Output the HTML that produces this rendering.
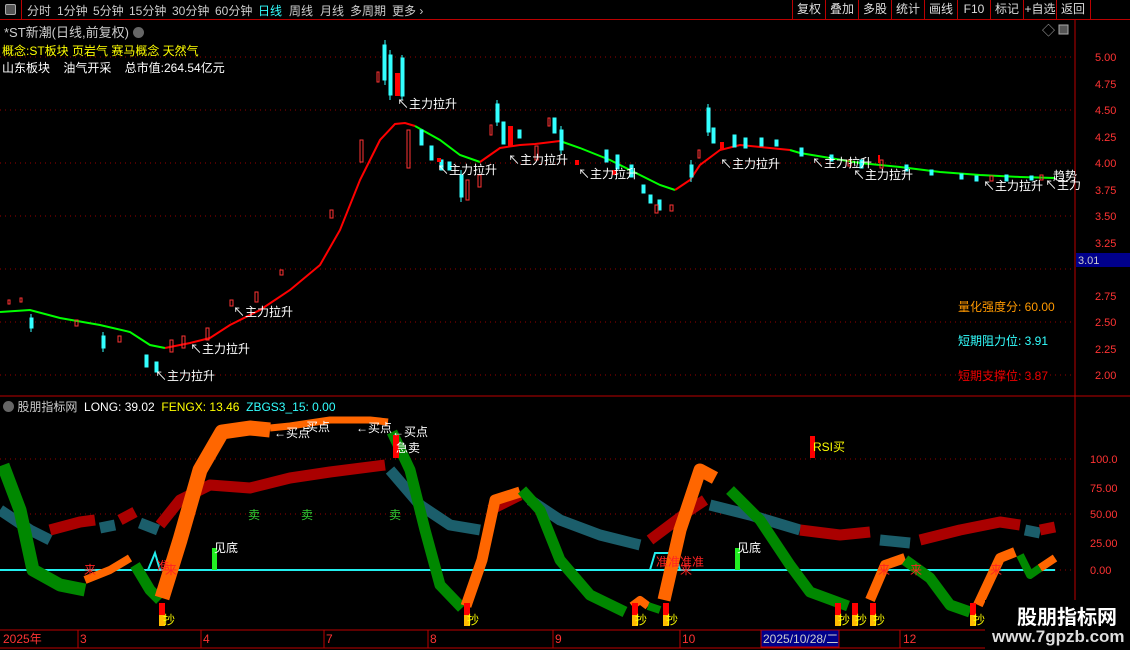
<!DOCTYPE html>
<html><head><meta charset="utf-8"><style>
html,body{margin:0;padding:0;background:#000;width:1130px;height:650px;overflow:hidden;font-family:"Liberation Sans","Noto Sans CJK SC",sans-serif;}
.t{position:absolute;font-size:12px;white-space:nowrap;}
#top{position:absolute;left:0;top:0;width:1130px;height:19px;border-bottom:1px solid #b00;}
#top span{position:absolute;top:2px;font-size:12px;color:#ccc;white-space:nowrap;}
.rb{position:absolute;top:0;height:19px;border-left:1px solid #b00;color:#ddd;font-size:12px;line-height:19px;text-align:center;white-space:nowrap;overflow:hidden;}
</style></head><body>
<div id="top">
<div style="position:absolute;left:0;top:0;width:21px;height:19px;border-right:1px solid #b00;"><div style="position:absolute;left:5px;top:4px;width:9px;height:9px;border:1px solid #aaa;background:#555;border-radius:2px"></div></div>
<span style="left:27px">分时</span><span style="left:57px">1分钟</span><span style="left:93px">5分钟</span><span style="left:129px">15分钟</span><span style="left:172px">30分钟</span><span style="left:215px">60分钟</span><span style="left:258px;color:#3ff">日线</span><span style="left:289px">周线</span><span style="left:320px">月线</span><span style="left:350px">多周期</span><span style="left:392px">更多 ›</span>
<div class="rb" style="left:792px;width:32px">复权</div><div class="rb" style="left:825px;width:32px">叠加</div><div class="rb" style="left:858px;width:32px">多股</div><div class="rb" style="left:891px;width:32px">统计</div><div class="rb" style="left:924px;width:32px">画线</div><div class="rb" style="left:957px;width:32px">F10</div><div class="rb" style="left:990px;width:32px">标记</div><div class="rb" style="left:1023px;width:32px">+自选</div><div class="rb" style="left:1056px;width:32px">返回</div><div class="rb" style="left:1090px;width:40px"></div>
</div>
<svg width="1130" height="650" style="position:absolute;left:0;top:0" xmlns="http://www.w3.org/2000/svg">
<g stroke="#b00" fill="none">
<line x1="1075" y1="20" x2="1075" y2="630"/>
<line x1="0" y1="396" x2="1130" y2="396"/>
<line x1="0" y1="630" x2="1130" y2="630"/>
<line x1="0" y1="648" x2="1130" y2="648"/>
</g>
<g stroke="#900" stroke-dasharray="1,4">
<line x1="0" y1="57" x2="1075" y2="57"/><line x1="0" y1="110" x2="1075" y2="110"/><line x1="0" y1="163" x2="1075" y2="163"/><line x1="0" y1="216" x2="1075" y2="216"/><line x1="0" y1="269" x2="1075" y2="269"/><line x1="0" y1="322" x2="1075" y2="322"/><line x1="0" y1="375" x2="1075" y2="375"/>
<line x1="0" y1="459" x2="1075" y2="459"/><line x1="0" y1="514" x2="1075" y2="514"/><line x1="0" y1="570" x2="1075" y2="570"/>
</g>
<g fill="#f33" font-size="11" font-family="Liberation Sans">
<text x="1095" y="61">5.00</text><text x="1095" y="88">4.75</text><text x="1095" y="114">4.50</text><text x="1095" y="141">4.25</text><text x="1095" y="167">4.00</text><text x="1095" y="194">3.75</text><text x="1095" y="220">3.50</text><text x="1095" y="247">3.25</text><text x="1095" y="300">2.75</text><text x="1095" y="326">2.50</text><text x="1095" y="353">2.25</text><text x="1095" y="379">2.00</text>
<text x="1090" y="463">100.0</text><text x="1090" y="492">75.00</text><text x="1090" y="518">50.00</text><text x="1090" y="547">25.00</text><text x="1090" y="574">0.00</text>
</g>
<rect x="1076" y="253" width="54" height="14" fill="#00008b"/><text x="1078" y="264" fill="#ccc" font-size="11">3.01</text>
<polyline fill="none" stroke="#0f0" stroke-width="2" points="0,312 30,310 60,318 100,325 130,332 150,345 165,348"/>
<polyline fill="none" stroke="#f00" stroke-width="2" points="165,348 190,343 210,338 230,325 260,310 290,290 320,265 340,230 360,180 380,140 395,124 405,123 415,126"/>
<polyline fill="none" stroke="#0f0" stroke-width="2" points="415,126 440,140 460,155 480,162"/>
<polyline fill="none" stroke="#f00" stroke-width="2" points="480,162 500,148 520,145 535,144 560,141"/>
<polyline fill="none" stroke="#0f0" stroke-width="2" points="560,141 580,148 610,160 640,175 660,185 675,190"/>
<polyline fill="none" stroke="#f00" stroke-width="2" points="675,190 690,180 700,165 720,150 740,145 770,148 790,150"/>
<polyline fill="none" stroke="#0f0" stroke-width="2" points="790,150 800,153 830,158 860,163 900,167 940,172 980,175 1020,177 1055,178"/>
<g stroke="#3ff" stroke-width="1">
<line x1="31" y1="314" x2="31" y2="332"/><line x1="103" y1="332" x2="103" y2="352"/><line x1="385" y1="40" x2="385" y2="85"/><line x1="390" y1="50" x2="390" y2="100"/><line x1="402" y1="55" x2="402" y2="100"/><line x1="461" y1="170" x2="461" y2="202"/><line x1="497" y1="100" x2="497" y2="126"/><line x1="561" y1="126" x2="561" y2="154"/><line x1="708" y1="104" x2="708" y2="136"/><line x1="691" y1="160" x2="691" y2="182"/>
</g>
<g fill="#3ff" stroke="#3ff">
<rect x="30" y="318" width="3" height="10"/><rect x="102" y="336" width="3" height="12"/><rect x="145" y="355" width="3" height="12"/><rect x="155" y="362" width="3" height="10"/>
<rect x="383" y="45" width="3" height="35"/><rect x="389" y="55" width="3" height="40"/><rect x="401" y="58" width="3" height="38"/>
<rect x="420" y="130" width="3" height="15"/><rect x="430" y="146" width="3" height="14"/><rect x="440" y="160" width="3" height="10"/><rect x="460" y="175" width="3" height="22"/><rect x="448" y="162" width="3" height="8"/>
<rect x="496" y="104" width="3" height="18"/><rect x="502" y="122" width="3" height="22"/><rect x="518" y="130" width="3" height="8"/><rect x="553" y="118" width="3" height="15"/><rect x="560" y="130" width="3" height="20"/>
<rect x="605" y="150" width="3" height="12"/><rect x="616" y="155" width="3" height="14"/><rect x="630" y="165" width="3" height="12"/><rect x="642" y="185" width="3" height="8"/><rect x="649" y="195" width="3" height="8"/><rect x="658" y="200" width="3" height="10"/>
<rect x="690" y="165" width="3" height="12"/><rect x="707" y="108" width="3" height="24"/><rect x="712" y="128" width="3" height="15"/>
<rect x="733" y="135" width="3" height="12"/><rect x="744" y="138" width="3" height="10"/><rect x="760" y="138" width="3" height="8"/><rect x="775" y="140" width="3" height="6"/><rect x="800" y="148" width="3" height="8"/><rect x="830" y="155" width="3" height="6"/><rect x="860" y="160" width="3" height="8"/><rect x="905" y="165" width="3" height="6"/><rect x="930" y="170" width="3" height="5"/><rect x="960" y="174" width="3" height="5"/><rect x="975" y="176" width="3" height="5"/><rect x="1005" y="175" width="3" height="6"/><rect x="1030" y="176" width="3" height="4"/>
</g>
<g fill="none" stroke="#f33">
<rect x="8" y="300" width="2" height="4"/><rect x="20" y="298" width="2" height="4"/><rect x="75" y="320" width="3" height="6"/><rect x="118" y="336" width="3" height="6"/><rect x="170" y="340" width="3" height="12"/><rect x="182" y="336" width="3" height="12"/><rect x="206" y="328" width="3" height="12"/><rect x="230" y="300" width="3" height="6"/><rect x="255" y="292" width="3" height="10"/><rect x="280" y="270" width="3" height="5"/><rect x="330" y="210" width="3" height="8"/>
<rect x="360" y="140" width="3" height="22"/><rect x="377" y="72" width="2" height="10"/><rect x="407" y="130" width="3" height="38"/>
<rect x="490" y="125" width="2" height="10"/><rect x="535" y="146" width="3" height="14"/><rect x="466" y="180" width="3" height="20"/><rect x="478" y="175" width="3" height="12"/>
<rect x="548" y="118" width="2" height="8"/><rect x="655" y="205" width="3" height="8"/><rect x="670" y="205" width="3" height="6"/><rect x="698" y="150" width="2" height="8"/><rect x="848" y="160" width="3" height="6"/><rect x="880" y="160" width="3" height="8"/><rect x="990" y="176" width="3" height="5"/><rect x="1040" y="175" width="3" height="5"/>
</g>
<g fill="#f00"><rect x="395" y="73" width="5" height="23"/><rect x="508" y="126" width="5" height="20"/><rect x="575" y="160" width="4" height="5"/><rect x="437" y="158" width="4" height="4"/><rect x="720" y="142" width="4" height="8"/><rect x="878" y="155" width="2" height="8"/><rect x="612" y="170" width="4" height="5"/></g>
<g fill="#fff" font-size="12" font-family="Liberation Sans,Noto Sans CJK SC,sans-serif">
<text x="397" y="108">↖主力拉升</text><text x="437" y="174">↖主力拉升</text><text x="508" y="164">↖主力拉升</text><text x="578" y="178">↖主力拉升</text><text x="720" y="168">↖主力拉升</text><text x="812" y="167">↖主力拉升</text><text x="853" y="179">↖主力拉升</text><text x="983" y="190">↖主力拉升</text><text x="1045" y="189">↖主力</text><text x="1053" y="180">趋势</text>
<text x="233" y="316">↖主力拉升</text><text x="190" y="353">↖主力拉升</text><text x="155" y="380">↖主力拉升</text>
</g>
<text x="1042" y="35" fill="#aaa" font-size="13">◇</text>
<rect x="1059" y="25" width="9" height="9" fill="#555" stroke="#aaa"/>
<g fill="none" stroke-width="11" stroke-linejoin="round">
<polyline stroke="#1b5e6b" points="0,510 30,530 50,540"/>
<polyline stroke="#a00" points="50,530 80,522 95,520"/>
<polyline stroke="#1b5e6b" points="100,528 115,525"/>
<polyline stroke="#a00" points="120,520 135,512"/>
<polyline stroke="#1b5e6b" points="140,523 158,530"/>
<polyline stroke="#a00" points="160,525 180,500 210,485 250,488 290,478 330,472 385,465"/>
<polyline stroke="#1b5e6b" points="390,470 420,505 450,525 480,530"/>
<polyline stroke="#a00" points="490,510 520,495"/>
<polyline stroke="#1b5e6b" points="530,500 560,520 600,535 640,545"/>
<polyline stroke="#a00" points="650,540 690,510 705,500"/>
<polyline stroke="#1b5e6b" points="710,505 750,515 800,530"/>
<polyline stroke="#a00" points="800,530 840,535 870,532"/>
<polyline stroke="#1b5e6b" points="880,540 910,543"/>
<polyline stroke="#a00" points="920,540 960,530 1000,522 1020,525"/>
<polyline stroke="#1b5e6b" points="1025,530 1040,533"/>
<polyline stroke="#a00" points="1040,530 1055,527"/>
</g>
<line x1="0" y1="570" x2="1055" y2="570" stroke="#2ee" stroke-width="2"/>
<polyline fill="none" stroke="#2ee" stroke-width="2" points="148,570 155,553 160,570"/>
<polyline fill="none" stroke="#2ee" stroke-width="2" points="650,570 655,553 675,553 680,570"/>
<g fill="none" stroke-width="11" stroke-linejoin="round">
<polyline stroke="#080" stroke-width="13" points="3,465 20,510 33,570 60,585 85,590"/>
<polyline stroke="#f60" stroke-width="8" points="85,580 110,570 130,558"/>
<polyline stroke="#080" points="135,565 150,590 160,600"/>
<polyline stroke="#f60" stroke-width="15" points="162,598 180,540 200,470 222,432 250,428 270,430"/>
<polyline stroke="#f60" stroke-width="7" points="270,428 290,426 330,420 370,420 388,422"/>
<polyline stroke="#080" points="392,432 410,470 425,530 440,585 462,608"/>
<polyline stroke="#f60" points="466,606 482,560 495,500 520,492"/>
<polyline stroke="#080" points="522,490 540,510 560,560 590,595 625,612"/>
<polyline stroke="#f60" stroke-width="8" points="632,606 640,600 648,606"/>
<polyline stroke="#080" stroke-width="8" points="648,606 660,610"/>
<polyline stroke="#f60" stroke-width="13" points="664,600 680,530 700,470 715,478"/>
<polyline stroke="#080" points="730,490 760,520 790,565 810,592 848,606"/>
<polyline stroke="#f60" stroke-width="10" points="870,600 885,565 905,558"/>
<polyline stroke="#080" points="905,560 930,578 950,605 970,612"/>
<polyline stroke="#f60" stroke-width="10" points="978,605 1000,558 1015,552"/>
<polyline stroke="#080" stroke-width="8" points="1020,555 1030,575 1040,568"/>
<polyline stroke="#f60" stroke-width="8" points="1040,568 1055,558"/>
</g>
<g fill="#f00"><rect x="159" y="603" width="6" height="12"/><rect x="393" y="435" width="6" height="23"/><rect x="464" y="603" width="6" height="12"/><rect x="632" y="603" width="6" height="12"/><rect x="663" y="603" width="6" height="12"/><rect x="835" y="603" width="6" height="12"/><rect x="852" y="603" width="6" height="12"/><rect x="870" y="603" width="6" height="12"/><rect x="970" y="603" width="6" height="12"/><rect x="810" y="436" width="5" height="22"/></g>
<g fill="#fb0"><rect x="159" y="615" width="6" height="11"/><rect x="464" y="615" width="6" height="11"/><rect x="632" y="615" width="6" height="11"/><rect x="663" y="615" width="6" height="11"/><rect x="835" y="615" width="6" height="11"/><rect x="852" y="615" width="6" height="11"/><rect x="870" y="615" width="6" height="11"/><rect x="970" y="615" width="6" height="11"/></g>
<rect x="212" y="548" width="5" height="22" fill="#2e2"/><rect x="735" y="548" width="5" height="22" fill="#2e2"/>
<g font-size="12" font-family="Liberation Sans,Noto Sans CJK SC,sans-serif">
<g fill="#ff0"><text x="163" y="624">抄</text><text x="467" y="624">抄</text><text x="635" y="624">抄</text><text x="666" y="624">抄</text><text x="838" y="624">抄</text><text x="855" y="624">抄</text><text x="873" y="624">抄</text><text x="973" y="624">抄</text><text x="813" y="451">RSI买</text></g>
<g fill="#fff"><text x="214" y="552">见底</text><text x="737" y="552">见底</text><text x="274" y="437">←买点</text><text x="306" y="431">买点</text><text x="356" y="432">←买点</text><text x="392" y="436">←买点</text><text x="396" y="452">急卖</text></g>
<g fill="#3c3"><text x="248" y="519">卖</text><text x="301" y="519">卖</text><text x="389" y="519">卖</text></g>
<g fill="#f22"><text x="84" y="574">来</text><text x="157" y="570">准</text><text x="165" y="574">来</text><text x="656" y="566">准准准准</text><text x="680" y="574">来</text><text x="878" y="574">来</text><text x="910" y="574">来</text><text x="990" y="574">来</text></g>
</g>
<g fill="#f33" font-size="12"><text x="3" y="643">2025年</text><text x="80" y="643">3</text><text x="203" y="643">4</text><text x="326" y="643">7</text><text x="430" y="643">8</text><text x="555" y="643">9</text><text x="682" y="643">10</text><text x="903" y="643">12</text></g>
<g stroke="#b00"><line x1="78" y1="630" x2="78" y2="648"/><line x1="201" y1="630" x2="201" y2="648"/><line x1="324" y1="630" x2="324" y2="648"/><line x1="428" y1="630" x2="428" y2="648"/><line x1="553" y1="630" x2="553" y2="648"/><line x1="680" y1="630" x2="680" y2="648"/><line x1="900" y1="630" x2="900" y2="648"/></g>
<rect x="761" y="630" width="78" height="17" fill="#00008b" stroke="#b00"/><text x="763" y="643" fill="#ccc" font-size="12">2025/10/28/二</text>
</svg>
<div class="t" style="left:4px;top:22px;color:#ccc;font-size:13px">*ST新潮(日线,前复权) <span style="display:inline-block;width:11px;height:11px;border-radius:6px;background:#666;vertical-align:-1px"></span></div>
<div class="t" style="left:2px;top:42px;color:#ff0">概念:ST板块 页岩气 赛马概念 天然气</div>
<div class="t" style="left:2px;top:59px;color:#fff">山东板块 &nbsp;&nbsp;&nbsp;油气开采 &nbsp;&nbsp;&nbsp;总市值:264.54亿元</div>
<div class="t" style="left:958px;top:298px;color:#f90">量化强度分: 60.00</div>
<div class="t" style="left:958px;top:332px;color:#3ff">短期阻力位: 3.91</div>
<div class="t" style="left:958px;top:367px;color:#e00">短期支撑位: 3.87</div>
<div class="t" style="left:3px;top:398px;color:#ccc"><span style="display:inline-block;width:11px;height:11px;border-radius:6px;background:#666;vertical-align:-1px"></span> 股朋指标网 &nbsp;<span style="color:#fff">LONG: 39.02</span> &nbsp;<span style="color:#ff0">FENGX: 13.46</span> &nbsp;<span style="color:#3ff">ZBGS3_15: 0.00</span></div>
<div style="position:absolute;left:985px;top:600px;width:145px;height:50px;background:#000"></div>
<div class="t" style="left:1017px;top:601px;color:#fff;font-size:20px;font-weight:bold">股朋指标网</div>
<div class="t" style="left:992px;top:627px;color:#ddd;font-size:17px;font-weight:bold">www.7gpzb.com</div>
</body></html>
